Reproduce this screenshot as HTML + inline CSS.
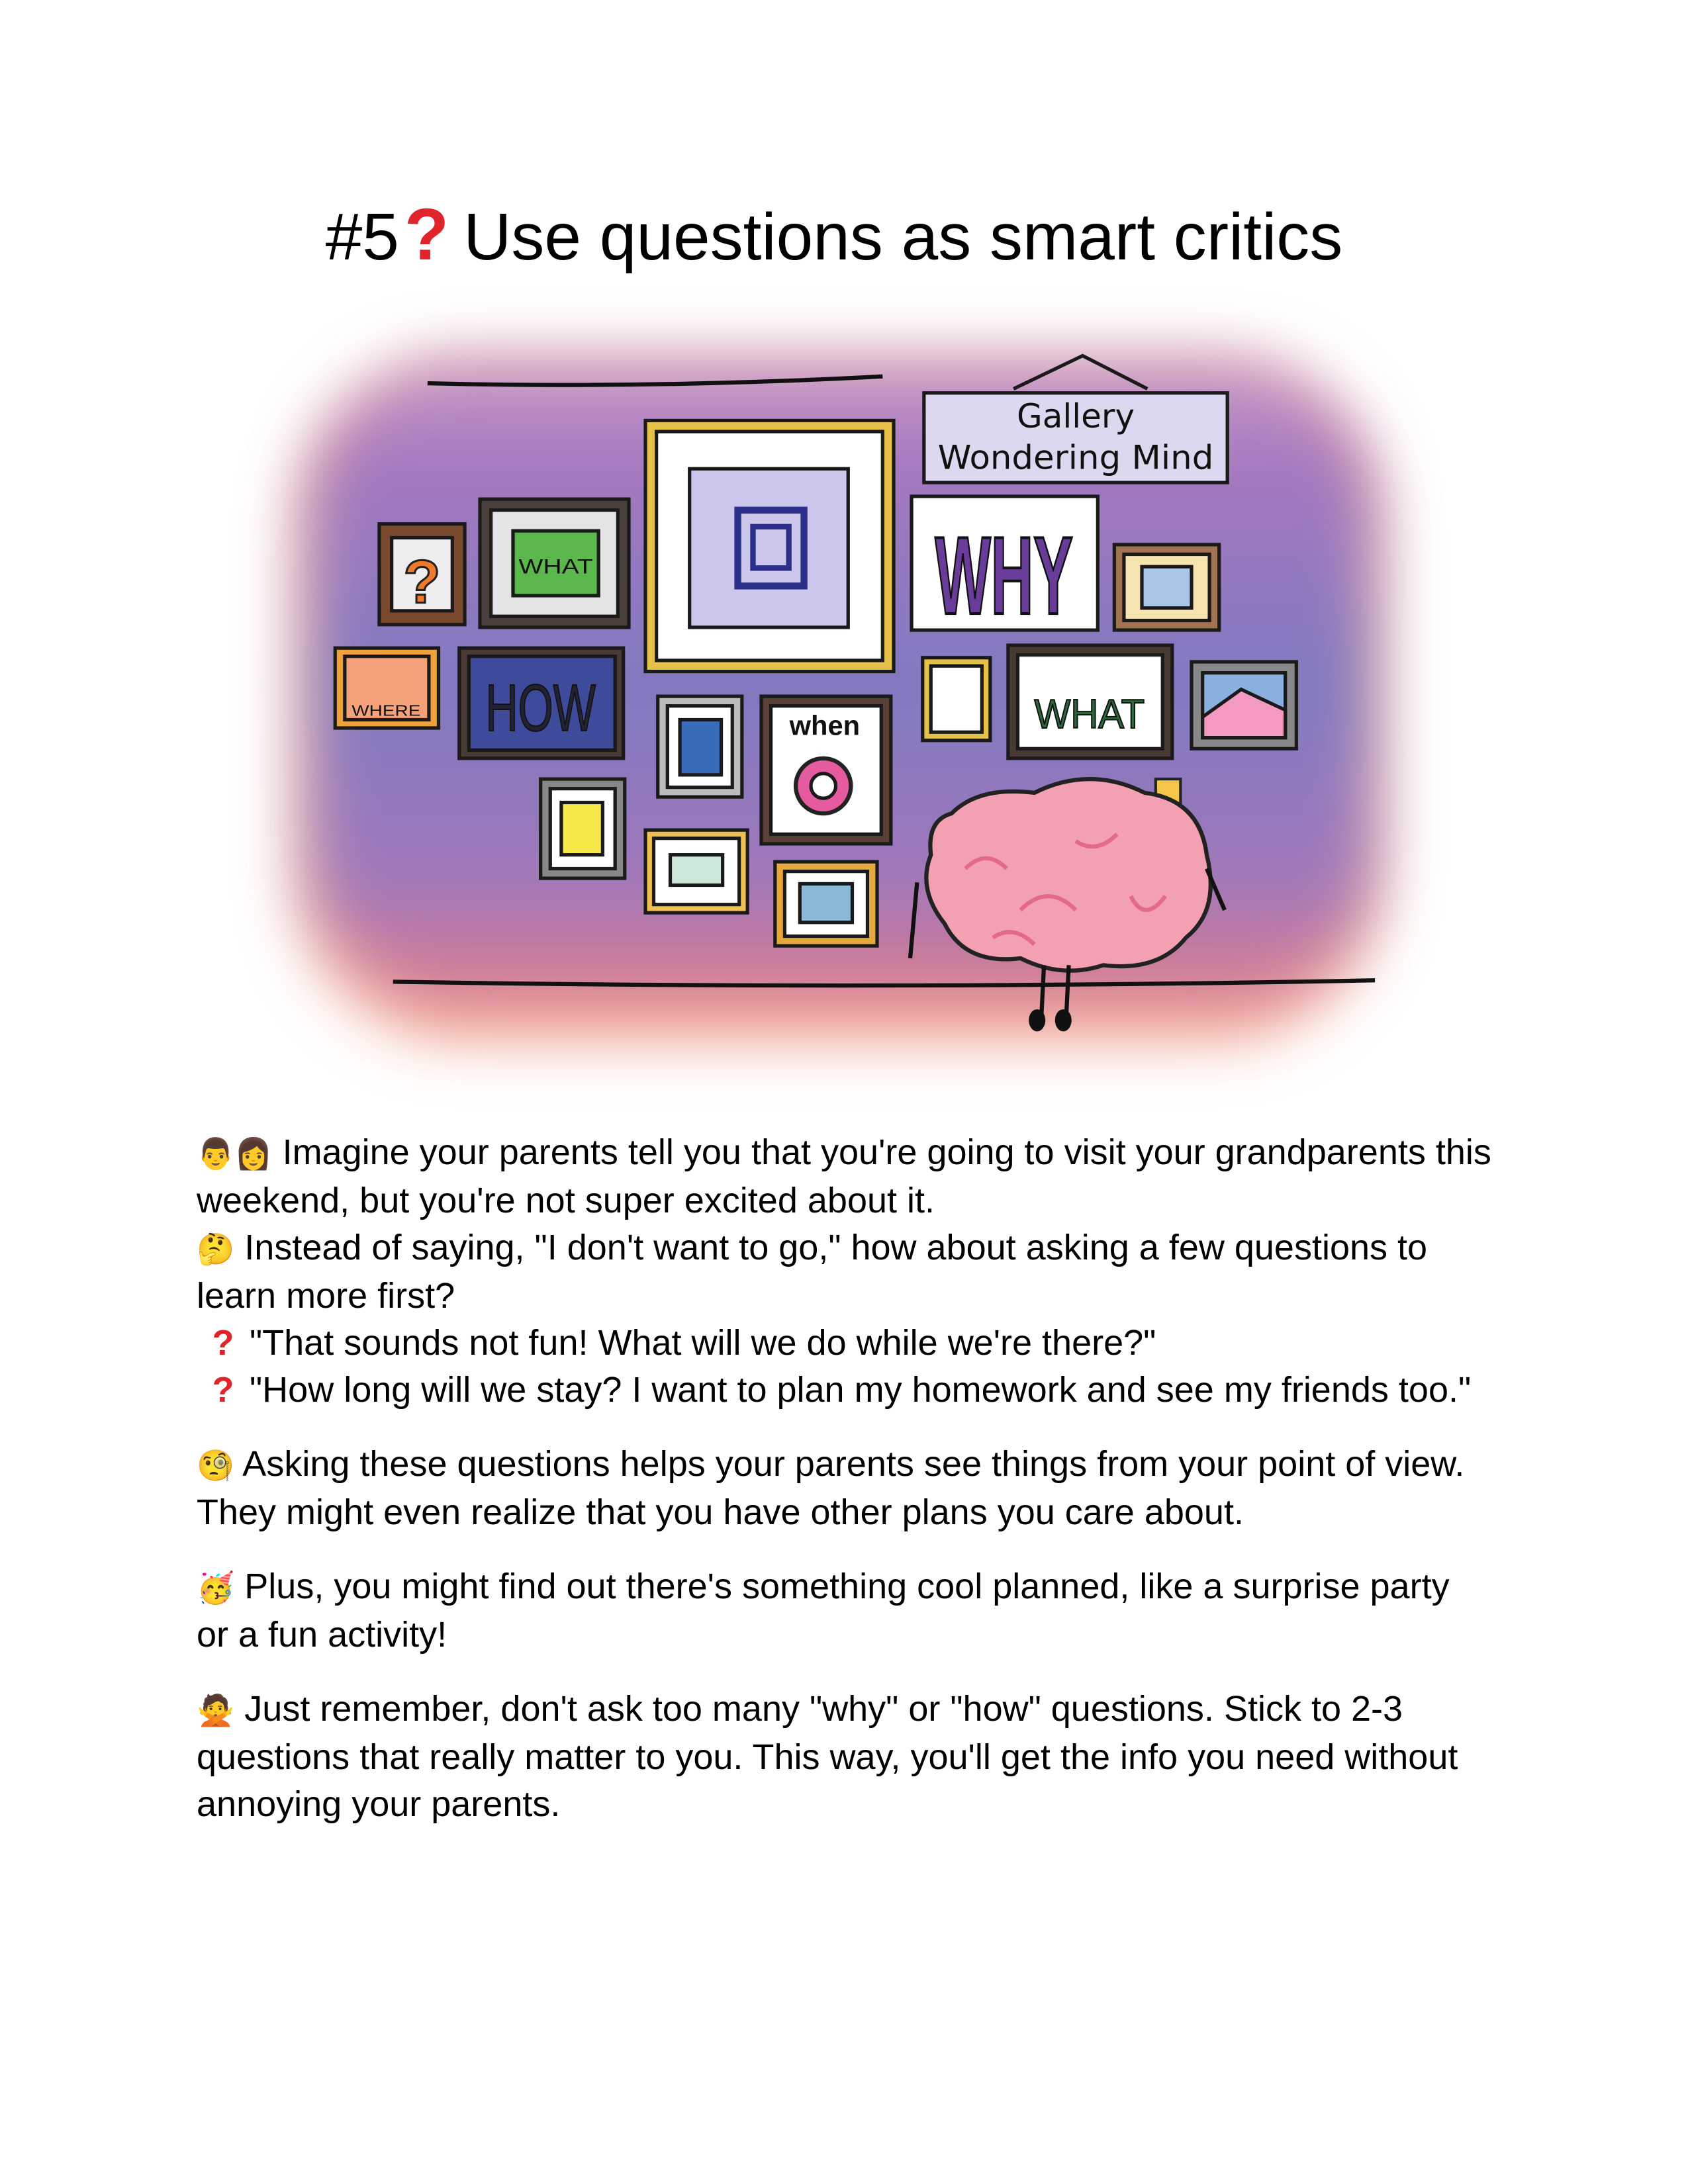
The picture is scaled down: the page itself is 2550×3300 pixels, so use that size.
<!DOCTYPE html>
<html><head><meta charset="utf-8"><style>
html,body{margin:0;padding:0;background:#fff}
body{width:2550px;height:3300px;position:relative;overflow:hidden;font-family:"Liberation Sans",Arial,sans-serif;color:#000}
h1{position:absolute;left:0;width:2520px;top:290px;margin:0;text-align:center;font-weight:normal;font-size:100px;line-height:130px}
h1 .q{color:#e0242a;font-weight:bold;font-size:110px;margin:0 22px 0 8px}
.txt{position:absolute;left:297px;top:1706px;width:1990px;font-size:54px;line-height:71px}
.txt p{margin:0 0 41px 0}
.e{font-size:46px;font-family:"DejaVu Sans",sans-serif}
.r{color:#e0242a;font-weight:bold;display:inline-block;width:80px;text-align:center}
svg.ill{position:absolute;left:0;top:0}
</style></head><body>
<svg class="ill" width="2550" height="3300" viewBox="0 0 1224 1584" xmlns="http://www.w3.org/2000/svg">
<defs>
<filter id="b" x="-30%" y="-30%" width="160%" height="160%"><feGaussianBlur stdDeviation="22"/></filter>
<linearGradient id="bg" x1="0" y1="0" x2="0" y2="1">
<stop offset="0" stop-color="#c79acb"/><stop offset="0.15" stop-color="#a678bf"/><stop offset="0.5" stop-color="#8079c0"/><stop offset="0.8" stop-color="#a078bb"/><stop offset="1" stop-color="#e07c88"/></linearGradient>
</defs>
<rect x="215" y="265" width="785" height="490" rx="120" fill="#f6a88a" filter="url(#b)" opacity="0.8"/>
<rect x="225" y="262" width="770" height="470" rx="110" fill="url(#bg)" filter="url(#b)"/>
<path d="M310 278 Q470 282 640 273" stroke="#111" stroke-width="3" fill="none"/>
<path d="M285 712 Q640 718 997 711" stroke="#111" stroke-width="3" fill="none"/>
<g stroke="#1a1a1a" stroke-width="2.5">
<rect x="275" y="380" width="62" height="73" fill="#7a4a2e"/><rect x="284" y="390" width="44" height="53" fill="#eee"/>
<text x="306" y="437" font-size="44" text-anchor="middle" fill="#f07a2a" stroke="#222" stroke-width="1.5" font-weight="bold">?</text>
<rect x="348" y="362" width="108" height="93" fill="#4a3f3a"/><rect x="356" y="370" width="92" height="77" fill="#e4e4e4"/><rect x="372" y="385" width="62" height="47" fill="#5cb84c"/>
<text x="403" y="416" font-size="15" text-anchor="middle" fill="#111" stroke="none" textLength="54" lengthAdjust="spacingAndGlyphs">WHAT</text>
<rect x="468" y="305" width="180" height="182" fill="#e6c14a"/><rect x="476" y="313" width="164" height="166" fill="#fff"/><rect x="500" y="340" width="115" height="115" fill="#cdc6ec"/>
<rect x="535" y="370" width="48" height="55" fill="none" stroke="#2b2f8a" stroke-width="5"/><rect x="546" y="382" width="26" height="30" fill="none" stroke="#2b2f8a" stroke-width="4"/>
<rect x="670" y="285" width="220" height="65" fill="#ddd8ef"/>
<path d="M735 282 L785 258 L832 282" fill="none"/>
<rect x="661" y="360" width="135" height="97" fill="#fff"/>
<text x="728" y="445" font-size="80" text-anchor="middle" fill="#6a3c9a" stroke="#111" stroke-width="2" font-weight="bold" textLength="100" lengthAdjust="spacingAndGlyphs">WHY</text>
<rect x="808" y="395" width="76" height="62" fill="#a07452"/><rect x="815" y="402" width="62" height="48" fill="#f7e3b0"/><rect x="828" y="411" width="36" height="30" fill="#a9c5e8"/>
<rect x="243" y="470" width="75" height="58" fill="#f0a13a"/><rect x="250" y="476" width="61" height="46" fill="#f5a27a"/>
<text x="280" y="519" font-size="11" text-anchor="middle" fill="#111" stroke="none" textLength="50" lengthAdjust="spacingAndGlyphs">WHERE</text>
<rect x="333" y="470" width="119" height="80" fill="#4a3a34"/><rect x="340" y="476" width="106" height="68" fill="#3e4a9a"/>
<text x="392" y="530" font-size="48" text-anchor="middle" fill="#223" stroke="#111" stroke-width="1" textLength="80" lengthAdjust="spacingAndGlyphs">HOW</text>
<rect x="477" y="505" width="61" height="73" fill="#bbb"/><rect x="484" y="512" width="47" height="59" fill="#fff"/><rect x="493" y="522" width="30" height="40" fill="#3a6bb8"/>
<rect x="552" y="505" width="94" height="107" fill="#5a4036"/><rect x="559" y="512" width="80" height="93" fill="#fff"/>
<text x="598" y="533" font-size="20" text-anchor="middle" fill="#111" stroke="none" font-weight="bold">when</text>
<circle cx="597" cy="570" r="20" fill="#e65aa0" stroke="#222" stroke-width="3"/><circle cx="597" cy="570" r="9" fill="#fff"/>
<rect x="392" y="565" width="61" height="72" fill="#888"/><rect x="399" y="572" width="47" height="58" fill="#fff"/><rect x="407" y="582" width="30" height="38" fill="#f7e84a"/>
<rect x="468" y="602" width="74" height="60" fill="#f0c050"/><rect x="474" y="608" width="62" height="48" fill="#fff"/><rect x="486" y="620" width="38" height="22" fill="#cde8d8"/>
<rect x="562" y="625" width="74" height="61" fill="#e6a83a"/><rect x="569" y="632" width="60" height="47" fill="#fff"/><rect x="580" y="641" width="38" height="28" fill="#8ab8d8"/>
<rect x="669" y="477" width="49" height="60" fill="#e6c14a"/><rect x="675" y="483" width="37" height="48" fill="#fff"/>
<rect x="731" y="468" width="119" height="82" fill="#4a3a34"/><rect x="738" y="475" width="105" height="68" fill="#fff"/>
<text x="790" y="528" font-size="30" text-anchor="middle" fill="#2a6a3a" stroke="#111" stroke-width="1" textLength="80" lengthAdjust="spacingAndGlyphs">WHAT</text>
<rect x="864" y="480" width="76" height="63" fill="#888"/><rect x="872" y="488" width="60" height="47" fill="#8ab0e0"/><path d="M872 520 L900 500 L932 515 L932 535 L872 535Z" fill="#f49ac0"/>
</g>
<text x="780" y="310" font-size="24" text-anchor="middle" fill="#111" font-family="DejaVu Sans">Gallery</text>
<text x="780" y="340" font-size="24" text-anchor="middle" fill="#111" font-family="DejaVu Sans" textLength="200" lengthAdjust="spacingAndGlyphs">Wondering Mind</text>
<rect x="838" y="565" width="18" height="30" fill="#f3c64a" stroke="#222" stroke-width="2"/>
<path d="M690 590 Q710 570 750 575 Q790 555 830 575 Q870 580 875 620 Q885 660 860 680 Q840 705 800 700 Q770 710 740 695 Q700 700 685 670 Q665 645 675 620 Q672 595 690 590Z" fill="#f2a0b2" stroke="#222" stroke-width="3"/>
<path d="M700 630 q15 -15 30 0 M740 660 q20 -20 40 0 M780 610 q15 10 30 -5 M820 650 q10 20 25 0 M720 680 q15 -10 30 5" stroke="#e46a8a" stroke-width="3" fill="none"/>
<path d="M757 700 L755 740 M775 700 L773 740 M665 640 L660 695 M875 630 L888 660" stroke="#111" stroke-width="3" fill="none"/>
<ellipse cx="752" cy="740" rx="6" ry="8" fill="#111"/><ellipse cx="771" cy="740" rx="6" ry="8" fill="#111"/>
</svg>
<h1>#5<span class="q">?</span>Use questions as smart critics</h1>
<div class="txt">
<p><span class="e">👨👩</span> Imagine your parents tell you that you're going to visit your grandparents this weekend, but you're not super excited about it.<br><span class="e">🤔</span> Instead of saying, "I don't want to go," how about asking a few questions to learn more first?<br><span class="r">?</span>"That sounds not fun! What will we do while we're there?"<br><span class="r">?</span>"How long will we stay? I want to plan my homework and see my friends too."</p>
<p><span class="e">🧐</span> Asking these questions helps your parents see things from your point of view. They might even realize that you have other plans you care about.</p>
<p><span class="e">🥳</span> Plus, you might find out there's something cool planned, like a surprise party<br>or a fun activity!</p>
<p><span class="e">🙅</span> Just remember, don't ask too many "why" or "how" questions. Stick to 2-3 questions that really matter to you. This way, you'll get the info you need without annoying your parents.</p>
</div>
</body></html>
